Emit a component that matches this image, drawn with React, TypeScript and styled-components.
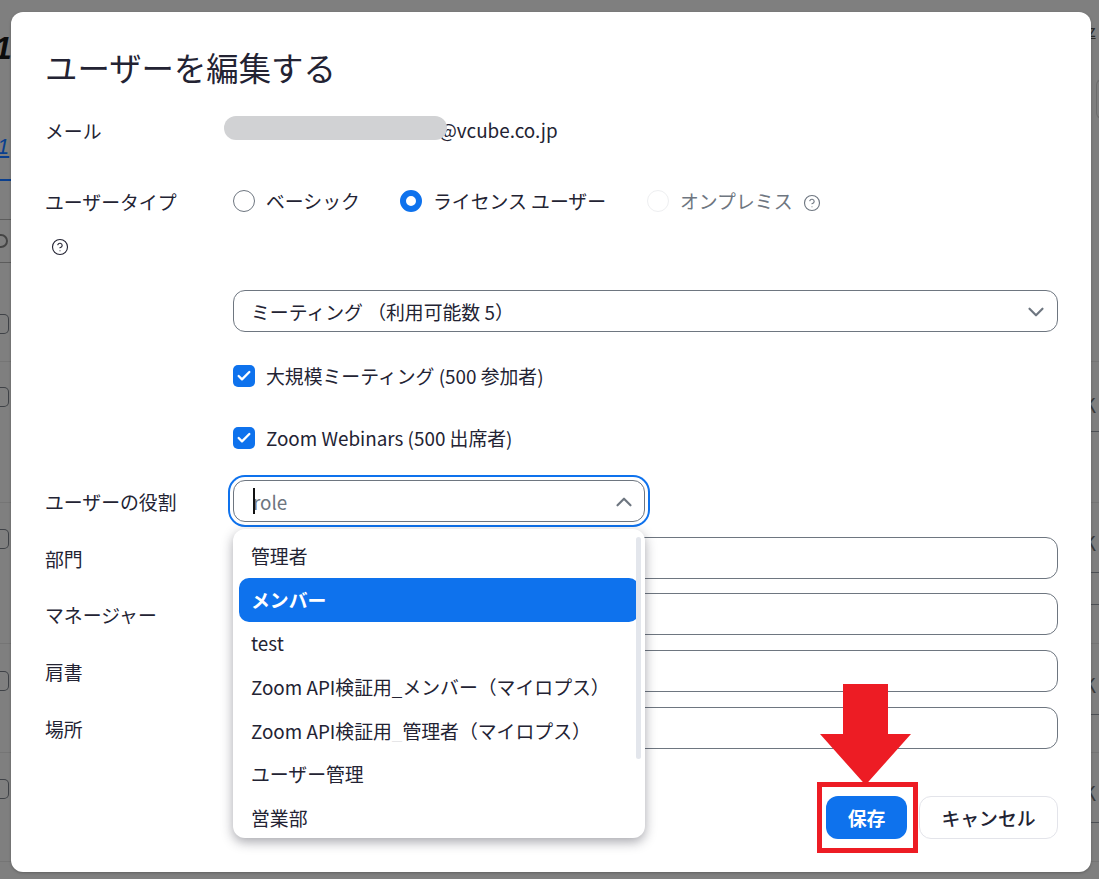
import React from "react";
import styled, { createGlobalStyle } from "styled-components";
import { ChevronDown, ChevronUp, CircleHelp, Check } from "lucide-react";

const Global = createGlobalStyle`
  html, body { margin: 0; padding: 0; width: 1099px; height: 879px; overflow: hidden; background: #7f7f7f; }
  body { font-family: "Noto Sans CJK JP", "Noto Sans", sans-serif; color: #232333; }
  * { box-sizing: border-box; }
`;

const Page = styled.div`
  position: relative;
  width: 1099px;
  height: 879px;
  overflow: hidden;
  background: #7f7f7f;
`;

/* ---------- dimmed page behind the dialog ---------- */
const Backdrop = styled.div`
  display: flex;
  flex-direction: column;
  height: 879px;
  color: #111;
`;
const BackRow = styled.div<{ $h: number; $line?: string }>`
  height: ${(p) => p.$h}px;
  flex: none;
  display: flex;
  justify-content: space-between;
  border-bottom: 1px solid ${(p) => p.$line ?? "#757575"};
`;
const LeftCell = styled.div<{ $top: number }>`
  width: 11px;
  padding-top: ${(p) => p.$top}px;
`;
const RightCell = styled.div<{ $top: number }>`
  width: 8px;
  padding-top: ${(p) => p.$top}px;
  overflow: hidden;
`;
const BackBox = styled.div`
  width: 10px;
  height: 20px;
  margin-left: -1px;
  border: 1px solid #3f4247;
  border-left: none;
  border-radius: 0 5px 5px 0;
`;
const BackGlyph = styled.div<{ $h?: number }>`
  font-size: 20px;
  line-height: 20px;
  color: #3a3a3a;
  margin-left: -8px;
  width: 16px;
  height: ${(p) => p.$h ?? 40}px;
  border-bottom: 1px solid #4d5055;
`;
const BackRule = styled.div`
  margin-top: 31px;
  border-bottom: 1px solid #4d5055;
`;
const HeadLeft = styled.div`
  width: 11px;
  height: 181px;
  overflow: hidden;
  border-bottom: 2px solid #0a3f8e;
  padding-top: 28px;
`;
const BoldOne = styled.div`
  font: italic 700 32px/40px "Liberation Sans", sans-serif;
  color: #0c0c0c;
  margin-left: -6px;
  height: 106px;
`;
const LinkOne = styled.div`
  font: italic 400 22px/26px "Liberation Sans", sans-serif;
  color: #0a3f8e;
  margin-left: -3px;
  text-decoration: underline;
`;
const HeadRight = styled.div`
  width: 8px;
  padding-top: 20px;
  font-size: 16px;
  line-height: 20px;
  color: #2a2a2a;
  text-indent: -3px;
  text-decoration: underline;
  overflow: hidden;
`;
const SearchBoxLeft = styled.div`
  width: 11px;
  height: 44px;
  margin-top: 38px;
  border-top: 1px solid #5c5c5c;
  border-bottom: 1px solid #5c5c5c;
  display: flex;
  align-items: center;
  overflow: hidden;
`;
const SearchCircle = styled.div`
  width: 14px;
  height: 14px;
  border: 2px solid #444;
  border-radius: 50%;
  margin-left: -6px;
  flex: none;
`;
const SearchBoxRight = styled.div`
  width: 8px;
  height: 40px;
  margin: 39px 0 0 auto;
  border: 1px solid #6c6c6c;
  border-right: none;
  border-radius: 6px 0 0 6px;
  transform: translateX(5px);
`;

/* ---------- dialog ---------- */
const Dialog = styled.section`
  position: absolute;
  left: 11px;
  top: 12px;
  width: 1080px;
  height: 860px;
  background: #fff;
  border-radius: 12px;
  padding: 31px 33px 0 34px;
  box-shadow: 0 1px 3px rgba(0, 0, 0, 0.25);
`;
const Title = styled.h2`
  margin: 0;
  font-size: 32.4px;
  line-height: 48px;
  font-weight: 400;
  color: #232333;
`;
const Row = styled.div<{ $top: number }>`
  display: grid;
  grid-template-columns: 188px 1fr;
  margin-top: ${(p) => p.$top}px;
  font-size: 18.85px;
  line-height: 42px;
`;
const Label = styled.div`
  height: 42px;
  line-height: 44px;
`;
const LabelStack = styled.div`
  display: flex;
  flex-direction: column;
  align-items: flex-start;
`;
const LabelHelp = styled.span`
  display: flex;
  margin: 16px 0 0 6px;
  color: #232333;
`;
const EmailValue = styled.div`
  display: flex;
  align-items: center;
  height: 42px;
`;
const Redaction = styled.span`
  width: 223px;
  height: 24px;
  margin-left: -9px;
  margin-top: -4px;
  border-radius: 12px;
  background: #d1d2d4;
  position: relative;
  z-index: 1;
`;
const EmailDomain = styled.span`
  margin-left: -8px;
`;
const RadioGroup = styled.div`
  display: flex;
  align-items: center;
  height: 42px;
`;
const RadioOption = styled.label<{ $w: number; $off?: boolean }>`
  display: flex;
  align-items: center;
  gap: 11px;
  width: ${(p) => p.$w}px;
  flex: none;
  white-space: nowrap;
  color: ${(p) => (p.$off ? "#6e7680" : "#232333")};
`;
const RadioDot = styled.span<{ $on?: boolean; $off?: boolean }>`
  width: 22px;
  height: 22px;
  flex: none;
  border-radius: 50%;
  background: #fff;
  border: ${(p) =>
    p.$on ? "6px solid #0e72ed" : p.$off ? "1px solid #eeeff1" : "1px solid #6e7680"};
`;
const InlineHelp = styled.span`
  display: flex;
  margin-left: 11px;
  margin-top: 3px;
  color: #6e7680;
`;
const Spacer = styled.div``;
const Field = styled.div<{ $h?: number }>`
  position: relative;
  height: ${(p) => p.$h ?? 42}px;
  display: flex;
  align-items: center;
  justify-content: space-between;
  padding: 2px 8px 0 17px;
  border: 1px solid #6e7680;
  border-radius: 12px;
  background: #fff;
  font-size: 18.85px;
  line-height: 24px;
`;
const FocusField = styled(Field)`
  box-shadow: 0 0 0 3px #fff, 0 0 0 5px #0e72ed;
  width: 412px;
  padding-left: 19px;
  padding-right: 7px;
`;
const Placeholder = styled.span`
  position: relative;
  color: #6e7680;
`;
const Caret = styled.span`
  position: absolute;
  left: 0;
  top: -2px;
  width: 2px;
  height: 26px;
  background: #111;
`;
const ChevronBox = styled.span`
  display: flex;
  color: #6e7680;
`;
const CheckRow = styled.div<{ $top: number }>`
  display: flex;
  align-items: center;
  gap: 11px;
  height: 22px;
  margin: ${(p) => p.$top}px 0 0 188px;
  font-size: 18.85px;
  line-height: 22px;
`;
const CheckBox = styled.span`
  width: 22px;
  height: 22px;
  flex: none;
  border-radius: 5px;
  background: #0e72ed;
  color: #fff;
  display: flex;
  align-items: center;
  justify-content: center;
`;

/* ---------- dropdown ---------- */
const Menu = styled.ul`
  position: absolute;
  z-index: 3;
  left: -1px;
  top: 48px;
  width: 412px;
  height: 309px;
  margin: 0;
  padding: 5.5px 6px;
  list-style: none;
  overflow: hidden;
  background: #fff;
  border-radius: 12px;
  box-shadow: 0 4px 12px rgba(35, 35, 51, 0.4);
`;
const MenuItem = styled.li<{ $on?: boolean }>`
  height: 43.6px;
  display: flex;
  align-items: center;
  padding-left: 12px;
  border-radius: 10px;
  white-space: pre;
  margin-right: ${(p) => (p.$on ? "0" : "10px")};
  font-size: 18.85px;
  font-weight: ${(p) => (p.$on ? 700 : 400)};
  color: ${(p) => (p.$on ? "#fff" : "#232333")};
  background: ${(p) => (p.$on ? "#0e72ed" : "transparent")};
`;
const FaintMark = styled.span`
  color: #e6e6e8;
`;
const ScrollThumb = styled.div`
  position: absolute;
  right: 4px;
  top: 8px;
  width: 5px;
  height: 222px;
  border-radius: 3px;
  background: #e3e6ec;
`;

/* ---------- footer ---------- */
const Footer = styled.div`
  display: flex;
  justify-content: flex-end;
  gap: 12px;
  margin-top: 47px;
`;
const SaveButton = styled.button`
  width: 81px;
  height: 43px;
  border: none;
  border-radius: 12px;
  background: #0e72ed;
  color: #fff;
  font: 700 18.85px/24px "Noto Sans CJK JP", sans-serif;
`;
const CancelButton = styled.button`
  width: 139px;
  height: 43px;
  border: 1px solid #e3e4ea;
  border-radius: 12px;
  background: #fff;
  color: #232333;
  font: 500 18.85px/24px "Noto Sans CJK JP", sans-serif;
`;

/* ---------- annotation ---------- */
const CalloutBox = styled.div`
  position: absolute;
  left: 817px;
  top: 782px;
  width: 101px;
  height: 71px;
  border: 5px solid #ed1c24;
`;
const CalloutArrow = styled.svg`
  position: absolute;
  left: 820px;
  top: 684px;
`;

const App = () => (
  <Page>
    <Global />
    <Backdrop>
      <BackRow $h={262} $line="transparent">
        <div>
          <HeadLeft>
            <BoldOne>1</BoldOne>
            <LinkOne>1</LinkOne>
          </HeadLeft>
          <SearchBoxLeft>
            <SearchCircle />
          </SearchBoxLeft>
        </div>
        <div>
          <HeadRight>z</HeadRight>
          <SearchBoxRight />
        </div>
      </BackRow>
      <BackRow $h={100}>
        <LeftCell $top={52}>
          <BackBox />
        </LeftCell>
      </BackRow>
      <BackRow $h={141}>
        <LeftCell $top={25}>
          <BackBox />
        </LeftCell>
        <RightCell $top={33}>
          <BackGlyph $h={37}>K</BackGlyph>
        </RightCell>
      </BackRow>
      <BackRow $h={141}>
        <LeftCell $top={26}>
          <BackBox />
        </LeftCell>
        <RightCell $top={30}>
          <BackGlyph>K</BackGlyph>
          <BackRule />
        </RightCell>
      </BackRow>
      <BackRow $h={109}>
        <LeftCell $top={27}>
          <BackBox />
        </LeftCell>
        <RightCell $top={31}>
          <BackGlyph>K</BackGlyph>
        </RightCell>
      </BackRow>
      <BackRow $h={109}>
        <LeftCell $top={26}>
          <BackBox />
        </LeftCell>
        <RightCell $top={30}>
          <BackGlyph>K</BackGlyph>
        </RightCell>
      </BackRow>
    </Backdrop>

    <Dialog>
      <Title>ユーザーを編集する</Title>
      <Row $top={18}>
        <Label>メール</Label>
        <EmailValue>
          <Redaction />
          <EmailDomain>@vcube.co.jp</EmailDomain>
        </EmailValue>
      </Row>
      <Row $top={29}>
        <LabelStack>
          <Label>ユーザータイプ</Label>
          <LabelHelp>
            <CircleHelp size={18} strokeWidth={1.5} />
          </LabelHelp>
        </LabelStack>
        <RadioGroup>
          <RadioOption $w={167}>
            <RadioDot />
            ベーシック
          </RadioOption>
          <RadioOption $w={247}>
            <RadioDot $on />
            ライセンス ユーザー
          </RadioOption>
          <RadioOption $w={145} $off>
            <RadioDot $off />
            オンプレミス
          </RadioOption>
          <InlineHelp>
            <CircleHelp size={18} strokeWidth={1.5} />
          </InlineHelp>
        </RadioGroup>
      </Row>
      <Row $top={34}>
        <Spacer />
        <Field>
          ミーティング （利用可能数 5）
          <ChevronBox>
            <ChevronDown size={26} strokeWidth={2} />
          </ChevronBox>
        </Field>
      </Row>
      <CheckRow $top={33}>
        <CheckBox>
          <Check size={16} strokeWidth={3.5} />
        </CheckBox>
        大規模ミーティング (500 参加者)
      </CheckRow>
      <CheckRow $top={40}>
        <CheckBox>
          <Check size={16} strokeWidth={3.5} />
        </CheckBox>
        Zoom Webinars (500 出席者)
      </CheckRow>
      <Row $top={31}>
        <Label>ユーザーの役割</Label>
        <FocusField>
          <Placeholder>
            role
            <Caret />
          </Placeholder>
          <ChevronBox>
            <ChevronUp size={26} strokeWidth={2} />
          </ChevronBox>
          <Menu>
            <MenuItem>管理者</MenuItem>
            <MenuItem $on>メンバー</MenuItem>
            <MenuItem>test</MenuItem>
            <MenuItem>Zoom API検証用_メンバー（マイロプス）</MenuItem>
            <MenuItem>
              Zoom API検証用<FaintMark>_</FaintMark>管理者（マイロプス）
            </MenuItem>
            <MenuItem>ユーザー管理</MenuItem>
            <MenuItem>営業部</MenuItem>
            <ScrollThumb />
          </Menu>
        </FocusField>
      </Row>
      <Row $top={15}>
        <Label>部門</Label>
        <Field />
      </Row>
      <Row $top={14}>
        <Label>マネージャー</Label>
        <Field />
      </Row>
      <Row $top={15}>
        <Label>肩書</Label>
        <Field />
      </Row>
      <Row $top={15}>
        <Label>場所</Label>
        <Field />
      </Row>
      <Footer>
        <SaveButton>保存</SaveButton>
        <CancelButton>キャンセル</CancelButton>
      </Footer>
    </Dialog>

    <CalloutBox />
    <CalloutArrow width="91" height="101" viewBox="0 0 91 101">
      <path d="M23 0 H68 V50 H91 L45.5 101 L0 50 H23 Z" fill="#ed1c24" />
    </CalloutArrow>
  </Page>
);

export default App;
